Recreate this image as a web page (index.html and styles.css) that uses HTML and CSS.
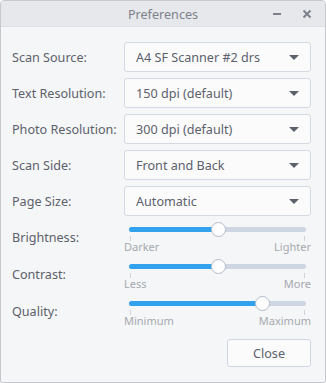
FILE: index.html
```html
<!DOCTYPE html>
<html>
<head>
<meta charset="utf-8">
<link rel="stylesheet" href="styles.css">
</head>
<body>
<div class="window">
  <div class="titlebar">
    <div class="title">Preferences</div>
    <div class="wbtns">
      <svg class="wbtn" width="10" height="10" viewBox="0 0 10 10"><rect x="1" y="4" width="8" height="2" fill="#7c818c"/></svg>
      <svg class="wbtn" width="10" height="10" viewBox="0 0 10 10"><path d="M1.5 1.5 L8.5 8.5 M8.5 1.5 L1.5 8.5" stroke="#7c818c" stroke-width="2" fill="none"/></svg>
    </div>
  </div>
  <div class="content">
    <div class="form">
      <div class="label">Scan Source:</div>
      <div class="combo"><span>A4 SF Scanner #2 drs</span><i class="arrow"></i></div>
      <div class="label">Text Resolution:</div>
      <div class="combo"><span>150 dpi (default)</span><i class="arrow"></i></div>
      <div class="label">Photo Resolution:</div>
      <div class="combo"><span>300 dpi (default)</span><i class="arrow"></i></div>
      <div class="label">Scan Side:</div>
      <div class="combo"><span>Front and Back</span><i class="arrow"></i></div>
      <div class="label">Page Size:</div>
      <div class="combo"><span>Automatic</span><i class="arrow"></i></div>

      <div class="label">Brightness:</div>
      <div class="scale">
        <div class="track"><div class="fill" style="width:50%"></div><div class="knob" style="left:50%"></div></div>
        <div class="ticks"><i></i><i></i></div>
        <div class="marks"><span>Darker</span><span>Lighter</span></div>
      </div>
      <div class="label">Contrast:</div>
      <div class="scale">
        <div class="track"><div class="fill" style="width:50%"></div><div class="knob" style="left:50%"></div></div>
        <div class="ticks"><i></i><i></i></div>
        <div class="marks"><span>Less</span><span>More</span></div>
      </div>
      <div class="label">Quality:</div>
      <div class="scale">
        <div class="track"><div class="fill" style="width:75%"></div><div class="knob" style="left:75%"></div></div>
        <div class="ticks"><i></i><i></i></div>
        <div class="marks"><span>Minimum</span><span>Maximum</span></div>
      </div>
    </div>
    <div class="actions"><button class="btn">Close</button></div>
  </div>
</div>
</body>
</html>
```
FILE: styles.css
```css
* { box-sizing: border-box; }
html, body { margin: 0; padding: 0; }
body {
  width: 326px; height: 383px;
  font-family: "Noto Sans", "Open Sans", sans-serif;
  font-size: 12.6px;
  color: #5c616c;
  background: #ffffff;
}
.window {
  width: 326px; height: 383px;
  border: 1px solid #c5c8cd;
  border-radius: 4px 4px 2px 2px;
  background: #f5f6f7;
  overflow: hidden;
  display: flex; flex-direction: column;
}
.titlebar {
  height: 26px;
  background: #e7e8eb;
  border-bottom: 1px solid #dcdfe3;
  display: flex; align-items: center; justify-content: center;
  position: relative;
}
.title { color: #7c818c; font-size: 12.6px; margin-top: 2px; }
.wbtns {
  position: absolute; right: 13px; top: 8px;
  display: flex; gap: 20px;
}
.wbtn { display: block; }
.content {
  flex: 1;
  padding: 15px 14px 15px 11px;
  display: flex; flex-direction: column;
}
.form {
  display: grid;
  grid-template-columns: 112px 1fr;
  row-gap: 6px;
  align-items: center;
}
.label { white-space: nowrap; }
.combo {
  height: 30px;
  border: 1px solid #d3d8e2;
  border-radius: 3px;
  background: #fbfbfc;
  display: flex; align-items: center; justify-content: space-between;
  padding: 0 11px 0 11px;
}
.arrow {
  width: 0; height: 0;
  border-left: 5px solid transparent;
  border-right: 5px solid transparent;
  border-top: 5px solid #5c616c;
}
.scale { padding: 0 5px; }
.track {
  position: relative;
  height: 14px;
  margin: 0;
}
.track::before {
  content: ""; position: absolute; left: 0; right: 0; top: 5px; height: 5px;
  border-radius: 3px; background: #cfd6e3;
}
.fill {
  position: absolute; left: 0; top: 5px; height: 5px;
  border-radius: 3px; background: #33a2ee;
}
.knob {
  position: absolute; top: 0; width: 15px; height: 15px;
  margin-left: -7px;
  border-radius: 50%;
  background: #fefefe;
  border: 1px solid #b4bccb;
}
.ticks { display: flex; justify-content: space-between; height: 5px; padding: 0 1px; }
.ticks i { display: block; width: 1px; height: 5px; background: #d0d3d8; }
.marks {
  display: flex; justify-content: space-between;
  font-size: 11px; color: #a5a9b0; line-height: 12px;
  margin: 0 -5px;
}
.actions { display: flex; justify-content: flex-end; margin-top: auto; }
.btn {
  width: 84px; height: 28px;
  font-family: inherit; font-size: 12.6px; color: #5c616c;
  background: #fbfbfc;
  border: 1px solid #cfd6e3;
  border-radius: 3px;
}
```
